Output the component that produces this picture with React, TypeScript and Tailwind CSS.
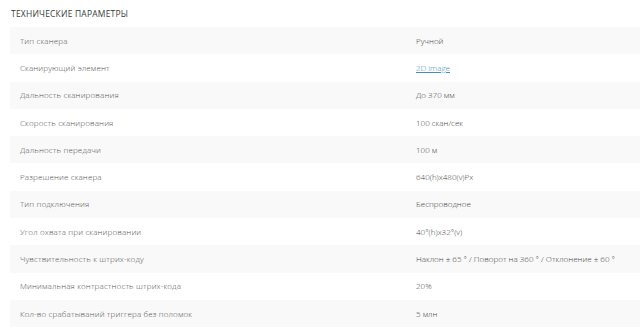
import React from 'react';

const rows: [string, string][] = [
  ['Тип сканера', 'Ручной'],
  ['Сканирующий элемент', '2D image'],
  ['Дальность сканирования', 'До 370 мм'],
  ['Скорость сканирования', '100 скан/сек'],
  ['Дальность передачи', '100 м'],
  ['Разрешение сканера', '640(h)x480(v)Px'],
  ['Тип подключения', 'Беспроводное'],
  ['Угол охвата при сканировании', '40°(h)x32°(v)'],
  ['Чувствительность к штрих-коду', 'Наклон ± 65 ° / Поворот на 360 ° / Отклонение ± 60 °'],
  ['Минимальная контрастность штрих-кода', '20%'],
  ['Кол-во срабатываний триггера без поломок', '5 млн'],
];

const App = () => {
  return (
    <div className="w-[640px] h-[334px] bg-white overflow-hidden pl-[10px] font-['Open_Sans',sans-serif]">
      <h3 className="pl-[1px] pt-[8px] h-[27px] text-[8.5px] font-normal uppercase text-[#3a3a3a] tracking-[0.2px]">
        Технические параметры
      </h3>
      <div>
        {rows.map(([label, value], i) => (
          <div
            key={label}
            className={`flex items-center h-[27.3px] text-[8px] font-light ${i % 2 === 0 ? 'bg-[#f9f9f9]' : 'bg-white'}`}
          >
            <div className="w-[406px] pl-[10px] text-[#555] tracking-[0.15px]">{label}</div>
            <div className="text-[#444]">
              {value === '2D image' ? (
                <a href="#" className="text-[#3f8fbf] underline">{value}</a>
              ) : (
                value
              )}
            </div>
          </div>
        ))}
      </div>
    </div>
  );
};

export default App;
